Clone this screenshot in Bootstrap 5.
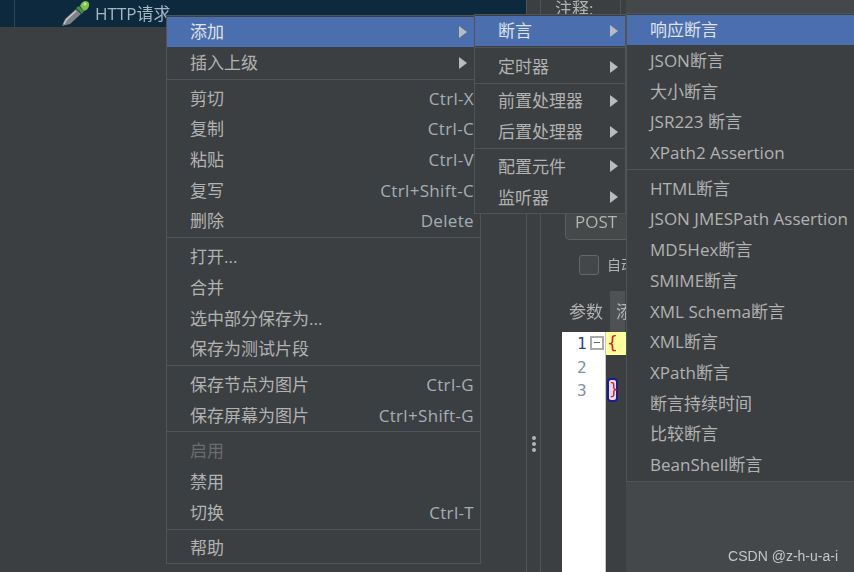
<!DOCTYPE html>
<html lang="zh">
<head>
<meta charset="utf-8">
<title>JMeter</title>
<link href="https://cdn.jsdelivr.net/npm/bootstrap@5.3.0/dist/css/bootstrap.min.css" rel="stylesheet">
<style>
html,body{margin:0;background:#3c3f41}
body{width:854px;height:572px;overflow:hidden;font-family:"Open Sans","Noto Sans CJK SC",sans-serif;font-size:17px;color:#b2b2b2}
.stage{width:854px;height:572px;overflow:hidden;filter:blur(.45px)}
.leftpane{width:527px;border-right:1px solid #515456}
.treebar{height:27px;background:#0d293e;color:#a4b5c4;padding-left:62px;gap:5px}
.treetick{left:14px;top:0;width:1px;height:27px;background:#2d4557}
.split{width:14px;border-right:1px solid #515456}
.splitdots{gap:2px;margin-top:436px}
.splitdots span{width:4px;height:4px;border-radius:50%;background:#b4b6b8}
.rightpane{width:85px}
.rightfill{background:#45484a}
.notes{height:18px;padding-left:14px;line-height:18px}
.notesline{left:79px;top:0;width:1px;height:14px;background:#515456}
.methodbox{margin:187px 0 0 24px;width:62px;height:35px;border:1px solid #5d6062;border-top:0;border-radius:0 0 0 5px;background:#45494a;padding-left:9px;line-height:33px}
.checkrow{margin:14px 0 0 38px;height:21px;font-size:14px}
.fakecheck{width:20px;height:20px;flex:none;border:1px solid #65686a;border-radius:3px;background:#43474a}
.paramrow{margin-top:16px;height:41px;padding-left:28px;gap:7px}
.paramtab{width:15px;height:41px;background:#4e5254;padding:8px 0 0 6px;white-space:nowrap}
.editor{margin-left:21px;width:64px;height:240px}
.gutter{width:44px;height:240px;background:#fff;border-right:1px solid #c8c8c8;color:#8390a8;font-family:"DejaVu Sans Mono",monospace;font-size:16px;padding:0 0 0 15px;line-height:23.5px}
.gutter b{color:#2b3f96;font-weight:400}
.foldbox{left:28px;top:4px;width:14px;height:14px;border:2px solid #a9a9a9;background:#fff}
.foldbox::after{content:"";position:absolute;left:2px;top:4px;width:6px;height:1px;background:#666}
.codecol{width:20px;font-family:"DejaVu Sans Mono",monospace;font-size:18px;color:#e11d1d}
.codeline{height:23px;line-height:21px;padding-left:1px;background:#ffff9e}
.closebrace{width:11px;height:24px;margin:23px 0 0 1px;border:2px solid #1c1c8a;border-radius:4px;background:#e6d9f3;line-height:18px;text-align:center;font-size:16px}
.wm{right:16px;bottom:5px;font-family:"Liberation Sans",sans-serif;font-size:14px;color:#c4c6c7}
.dropdown-menu.jm{--bs-dropdown-bg:#3c3f41;--bs-dropdown-border-color:#515456;--bs-dropdown-border-radius:0;--bs-dropdown-padding-y:0;--bs-dropdown-min-width:0;--bs-dropdown-font-size:17px;--bs-dropdown-color:#b2b2b2;margin:0;padding-top:.5px;font-size:17px}
.jm .dropdown-item{height:30.7px;padding:0 6px 0 23px;color:#b2b2b2;line-height:1}
.jm .dropdown-item.active{background:#4b6eaf;color:#dfe2e8}
.jm .dropdown-item.disabled{color:#6a6c6e}
.jm .dropdown-divider{margin:1px 0 3px;border-top:1px solid #515456;opacity:1}
.keys{color:#a4aeb6;letter-spacing:.33px}
.tri{width:0;height:0;border-left:8px solid #b9bbbd;border-top:6px solid transparent;border-bottom:6px solid transparent}
.m1{left:166px;top:15px;width:315px;height:549px}
.m1 .tri{margin-right:7px}
.m2{left:474px;top:14px;width:152px;height:200px}
.m2 .tri{margin-right:1px}
.m2 .dropdown-divider{margin-bottom:2.3px}
.m2 li:nth-child(2) .dropdown-divider{margin-bottom:3px}
.m2 li:nth-child(4) .dropdown-divider{margin-bottom:1.6px}
.m3{left:626px;top:13px;width:228px;height:469px;border-right:0}
.m3 .dropdown-item{padding-right:0}
</style>
</head>
<body>
<div class="stage position-relative d-flex">
  <div class="leftpane flex-shrink-0">
    <div class="treebar position-relative d-flex align-items-center">
      <span class="treetick position-absolute"></span>
      <svg width="28" height="26" viewBox="0 0 28 26" aria-hidden="true"><path d="M0 25 L3 18 L14 8 L19 13 L8 23 Z" fill="#7f8386"/><path d="M2 23 L5 18 L14 10" stroke="#c9cccd" stroke-width="1.3" fill="none"/><path d="M14 7 L20 13 L22 10 L17 5 Z" fill="#3f8f3c"/><path d="M18 5 Q20 0 24 0 Q28 1 27 5 Q26 9 22 10 Z" fill="#7fc24f"/><circle cx="23" cy="3" r="1.5" fill="#c2e59a"/></svg>
      <span>HTTP请求</span>
    </div>
  </div>
  <div class="split flex-shrink-0 d-flex flex-column align-items-center">
    <div class="splitdots d-flex flex-column"><span></span><span></span><span></span></div>
  </div>
  <div class="rightpane flex-shrink-0">
    <div class="notes position-relative">注释:<span class="notesline position-absolute"></span></div>
    <div class="methodbox">POST</div>
    <div class="checkrow d-flex align-items-center gap-2"><span class="fakecheck"></span><span class="text-nowrap">自动</span></div>
    <div class="paramrow d-flex align-items-center"><span>参数</span><span class="paramtab">添加</span></div>
    <div class="editor d-flex">
      <div class="gutter position-relative flex-shrink-0"><b>1</b><br>2<br>3<span class="foldbox position-absolute"></span></div>
      <div class="codecol"><div class="codeline">{</div><div class="closebrace">}</div></div>
    </div>
  </div>
  <div class="rightfill flex-grow-1"></div>

  <ul class="dropdown-menu show jm m1 position-absolute">
    <li><a class="dropdown-item active d-flex justify-content-between align-items-center" href="#">添加<span class="tri"></span></a></li>
    <li><a class="dropdown-item d-flex justify-content-between align-items-center" href="#">插入上级<span class="tri"></span></a></li>
    <li><hr class="dropdown-divider"></li>
    <li><a class="dropdown-item d-flex justify-content-between align-items-center" href="#">剪切<span class="keys">Ctrl-X</span></a></li>
    <li><a class="dropdown-item d-flex justify-content-between align-items-center" href="#">复制<span class="keys">Ctrl-C</span></a></li>
    <li><a class="dropdown-item d-flex justify-content-between align-items-center" href="#">粘贴<span class="keys">Ctrl-V</span></a></li>
    <li><a class="dropdown-item d-flex justify-content-between align-items-center" href="#">复写<span class="keys">Ctrl+Shift-C</span></a></li>
    <li><a class="dropdown-item d-flex justify-content-between align-items-center" href="#">删除<span class="keys">Delete</span></a></li>
    <li><hr class="dropdown-divider"></li>
    <li><a class="dropdown-item d-flex align-items-center" href="#">打开...</a></li>
    <li><a class="dropdown-item d-flex align-items-center" href="#">合并</a></li>
    <li><a class="dropdown-item d-flex align-items-center" href="#">选中部分保存为...</a></li>
    <li><a class="dropdown-item d-flex align-items-center" href="#">保存为测试片段</a></li>
    <li><hr class="dropdown-divider"></li>
    <li><a class="dropdown-item d-flex justify-content-between align-items-center" href="#">保存节点为图片<span class="keys">Ctrl-G</span></a></li>
    <li><a class="dropdown-item d-flex justify-content-between align-items-center" href="#">保存屏幕为图片<span class="keys">Ctrl+Shift-G</span></a></li>
    <li><hr class="dropdown-divider"></li>
    <li><a class="dropdown-item disabled d-flex align-items-center" href="#">启用</a></li>
    <li><a class="dropdown-item d-flex align-items-center" href="#">禁用</a></li>
    <li><a class="dropdown-item d-flex justify-content-between align-items-center" href="#">切换<span class="keys">Ctrl-T</span></a></li>
    <li><hr class="dropdown-divider"></li>
    <li><a class="dropdown-item d-flex align-items-center" href="#">帮助</a></li>
  </ul>

  <ul class="dropdown-menu show jm m2 position-absolute">
    <li><a class="dropdown-item active d-flex justify-content-between align-items-center" href="#">断言<span class="tri"></span></a></li>
    <li><hr class="dropdown-divider"></li>
    <li><a class="dropdown-item d-flex justify-content-between align-items-center" href="#">定时器<span class="tri"></span></a></li>
    <li><hr class="dropdown-divider"></li>
    <li><a class="dropdown-item d-flex justify-content-between align-items-center" href="#">前置处理器<span class="tri"></span></a></li>
    <li><a class="dropdown-item d-flex justify-content-between align-items-center" href="#">后置处理器<span class="tri"></span></a></li>
    <li><hr class="dropdown-divider"></li>
    <li><a class="dropdown-item d-flex justify-content-between align-items-center" href="#">配置元件<span class="tri"></span></a></li>
    <li><a class="dropdown-item d-flex justify-content-between align-items-center" href="#">监听器<span class="tri"></span></a></li>
  </ul>

  <ul class="dropdown-menu show jm m3 position-absolute">
    <li><a class="dropdown-item active d-flex align-items-center" href="#">响应断言</a></li>
    <li><a class="dropdown-item d-flex align-items-center" href="#">JSON断言</a></li>
    <li><a class="dropdown-item d-flex align-items-center" href="#">大小断言</a></li>
    <li><a class="dropdown-item d-flex align-items-center" href="#">JSR223 断言</a></li>
    <li><a class="dropdown-item d-flex align-items-center" href="#">XPath2 Assertion</a></li>
    <li><hr class="dropdown-divider"></li>
    <li><a class="dropdown-item d-flex align-items-center" href="#">HTML断言</a></li>
    <li><a class="dropdown-item d-flex align-items-center" href="#">JSON JMESPath Assertion</a></li>
    <li><a class="dropdown-item d-flex align-items-center" href="#">MD5Hex断言</a></li>
    <li><a class="dropdown-item d-flex align-items-center" href="#">SMIME断言</a></li>
    <li><a class="dropdown-item d-flex align-items-center" href="#">XML Schema断言</a></li>
    <li><a class="dropdown-item d-flex align-items-center" href="#">XML断言</a></li>
    <li><a class="dropdown-item d-flex align-items-center" href="#">XPath断言</a></li>
    <li><a class="dropdown-item d-flex align-items-center" href="#">断言持续时间</a></li>
    <li><a class="dropdown-item d-flex align-items-center" href="#">比较断言</a></li>
    <li><a class="dropdown-item d-flex align-items-center" href="#">BeanShell断言</a></li>
  </ul>
  <div class="wm position-absolute">CSDN @z-h-u-a-i</div>
</div>
<script src="https://cdn.jsdelivr.net/npm/bootstrap@5.3.0/dist/js/bootstrap.bundle.min.js"></script>
</body>
</html>
